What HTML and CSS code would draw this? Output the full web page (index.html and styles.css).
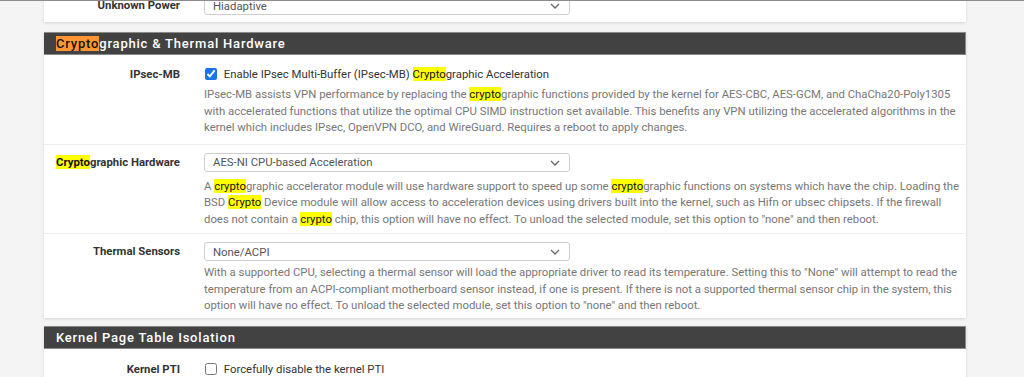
FILE: index.html
```html
<!DOCTYPE html>
<html lang="en">
  <head>
    <meta charset="UTF-8" />
    <title>Advanced: Miscellaneous</title>
    <link rel="stylesheet" href="styles.css">
  </head>
  <body>
    <div id="page">
      <!-- previous panel, scrolled mostly out of view -->
      <div class="panel panel-cut">
        <div class="form-row select-row">
          <label class="row-label">Unknown Power</label>
          <div class="row-control">
            <div class="select-box">
              <select><option>Hiadaptive</option></select>
              <svg class="chev" width="10" height="6" viewBox="0 0 10 6"><path d="M1 1l4 4 4-4" fill="none" stroke="#666" stroke-width="1.3"/></svg>
            </div>
          </div>
        </div>
      </div>

      <div class="panel">
        <h2 class="panel-heading"><span class="hit-current">Crypto</span>graphic &amp; Thermal Hardware</h2>
        <div class="form-row">
          <label class="row-label">IPsec-MB</label>
          <div class="row-control">
            <label class="check"><input type="checkbox" checked> Enable IPsec Multi-Buffer (IPsec-MB) <mark>Crypto</mark>graphic Acceleration</label>
            <p class="help">IPsec-MB assists VPN performance by replacing the <mark>crypto</mark>graphic functions provided by the kernel for AES-CBC, AES-GCM, and ChaCha20-Poly1305 with accelerated functions that utilize the optimal CPU SIMD instruction set available. This benefits any VPN utilizing the accelerated algorithms in the kernel which includes IPsec, OpenVPN DCO, and WireGuard. Requires a reboot to apply changes.</p>
          </div>
        </div>
        <div class="form-row select-row">
          <label class="row-label"><mark>Crypto</mark>graphic Hardware</label>
          <div class="row-control">
            <div class="select-box">
              <select><option>AES-NI CPU-based Acceleration</option></select>
              <svg class="chev" width="10" height="6" viewBox="0 0 10 6"><path d="M1 1l4 4 4-4" fill="none" stroke="#666" stroke-width="1.3"/></svg>
            </div>
            <p class="help">A <mark>crypto</mark>graphic accelerator module will use hardware support to speed up some <mark>crypto</mark>graphic functions on systems which have the chip. Loading the BSD <mark>Crypto</mark> Device module will allow access to acceleration devices using drivers built into the kernel, such as Hifn or ubsec chipsets. If the firewall does not contain a <mark>crypto</mark> chip, this option will have no effect. To unload the selected module, set this option to "none" and then reboot.</p>
          </div>
        </div>
        <div class="form-row select-row last">
          <label class="row-label">Thermal Sensors</label>
          <div class="row-control">
            <div class="select-box">
              <select><option>None/ACPI</option></select>
              <svg class="chev" width="10" height="6" viewBox="0 0 10 6"><path d="M1 1l4 4 4-4" fill="none" stroke="#666" stroke-width="1.3"/></svg>
            </div>
            <p class="help">With a supported CPU, selecting a thermal sensor will load the appropriate driver to read its temperature. Setting this to "None" will attempt to read the temperature from an ACPI-compliant motherboard sensor instead, if one is present. If there is not a supported thermal sensor chip in the system, this option will have no effect. To unload the selected module, set this option to "none" and then reboot.</p>
          </div>
        </div>
      </div>

      <div class="panel">
        <h2 class="panel-heading">Kernel Page Table Isolation</h2>
        <div class="form-row first-check">
          <label class="row-label">Kernel PTI</label>
          <div class="row-control">
            <label class="check"><input type="checkbox"> Forcefully disable the kernel PTI</label>
          </div>
        </div>
      </div>
    </div>
  </body>
</html>
```

FILE: styles.css
```css
* {
  box-sizing: border-box;
}
body {
  margin: 0;
  background-color: #f4f4f4;
  font-family: Roboto, "Liberation Sans", sans-serif;
  font-size: 11.35px;
  color: #555;
  border-top: 1px solid #8c8c8c;
  overflow: hidden;
}
#page {
  width: 922px;
  margin-left: 44px;
}
.panel {
  background: #fff;
  box-shadow: 0 1px 3px rgba(0, 0, 0, 0.13);
  margin-bottom: 8px;
}
.panel-cut {
  margin-top: -13px;
  margin-bottom: 10px;
}
.panel-cut .form-row {
  border-bottom: 0;
  padding-bottom: 7px;
}
.panel-heading {
  margin: 0;
  height: 23px;
  line-height: 21px;
  padding: 0 12px;
  background: #424242;
  border: 1px solid #8a8a8a;
  border-left: 0;
  color: #fff;
  font-size: 13px;
  font-weight: 500;
  letter-spacing: 0.8px;
}
.hit-current {
  background: #ff9632;
  color: #111;
}
mark {
  background: #ffff00;
  color: #111;
}
.form-row {
  display: grid;
  grid-template-columns: 148px 1fr;
  column-gap: 12px;
  padding: 10px 2px 8px 0;
  border-bottom: 1px solid #eee;
}
.select-row {
  padding-top: 8px;
  padding-bottom: 6px;
}
.form-row.last {
  border-bottom: 0;
  padding-bottom: 4px;
}
.form-row.first-check {
  padding-top: 11px;
}
.row-label {
  text-align: right;
  padding-right: 12px;
  font-weight: bold;
  color: #333;
  line-height: 19px;
}
.row-control {
  min-width: 0;
}
.check {
  display: block;
  line-height: 19px;
  color: #333;
}
.check input {
  margin: 0 4px 0 1px;
  width: 12px;
  height: 12px;
  vertical-align: -2px;
  accent-color: #1a73e8;
}
.select-box {
  position: relative;
  width: 366px;
}
.select-box select {
  display: block;
  width: 100%;
  height: 19px;
  padding: 0 8px;
  appearance: none;
  border: 1px solid #cfcfcf;
  border-radius: 3px;
  background: #fff;
  font-family: Roboto, "Liberation Sans", sans-serif;
  font-size: 11.35px;
  color: #555;
}
.chev {
  position: absolute;
  right: 10px;
  top: 7px;
}
.help {
  margin: 2px 0 0;
  line-height: 16.5px;
  color: #777;
}
.select-box + .help {
  margin-top: 6px;
}
.last .select-box + .help {
  margin-top: 3px;
}
```
